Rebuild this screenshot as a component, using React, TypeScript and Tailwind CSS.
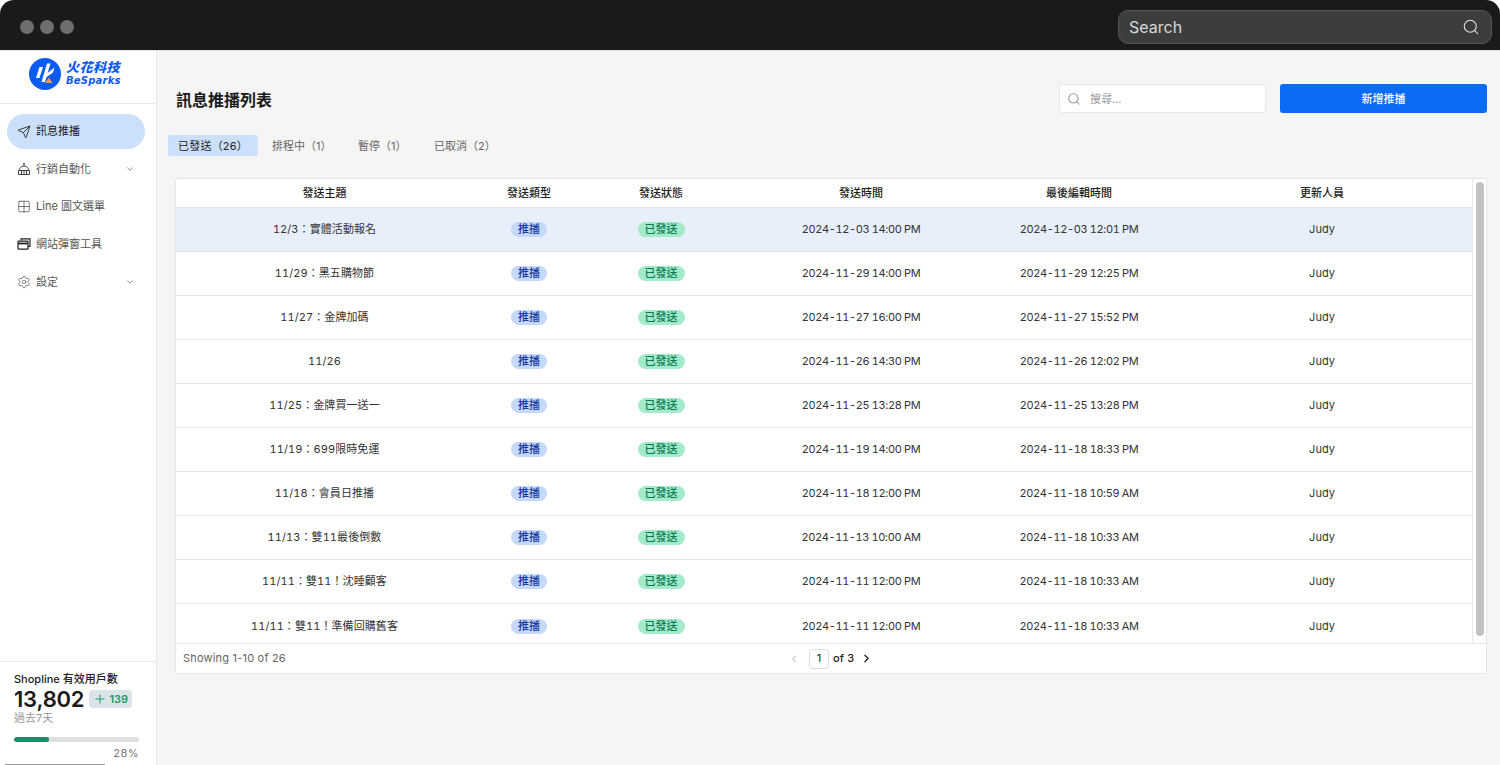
import React from 'react';
import { ChevronDown, ChevronLeft, ChevronRight, Grid2x2, Plus, Search, Send, Settings } from 'lucide-react';

const rows = [
  ['12/3：實體活動報名', '2024-12-03 14:00 PM', '2024-12-03 12:01 PM'],
  ['11/29：黑五購物節', '2024-11-29 14:00 PM', '2024-11-29 12:25 PM'],
  ['11/27：金牌加碼', '2024-11-27 16:00 PM', '2024-11-27 15:52 PM'],
  ['11/26', '2024-11-26 14:30 PM', '2024-11-26 12:02 PM'],
  ['11/25：金牌買一送一', '2024-11-25 13:28 PM', '2024-11-25 13:28 PM'],
  ['11/19：699限時免運', '2024-11-19 14:00 PM', '2024-11-18 18:33 PM'],
  ['11/18：會員日推播', '2024-11-18 12:00 PM', '2024-11-18 10:59 AM'],
  ['11/13：雙11最後倒數', '2024-11-13 10:00 AM', '2024-11-18 10:33 AM'],
  ['11/11：雙11！沈睡顧客', '2024-11-11 12:00 PM', '2024-11-18 10:33 AM'],
  ['11/11：雙11！準備回購舊客', '2024-11-11 12:00 PM', '2024-11-18 10:33 AM'],
];

const headers = ['發送主題', '發送類型', '發送狀態', '發送時間', '最後編輯時間', '更新人員'];
const tabs = ['排程中（1）', '暫停（1）', '已取消（2）'];
const gridCols = 'grid grid-cols-[297px_112px_152px_248px_188px_298px] items-center text-center';

function BotIcon() {
  return (
    <svg width="14" height="14" viewBox="0 0 14 14" fill="none" stroke="#444" strokeWidth="1">
      <path d="M7 1v3" />
      <circle cx="7" cy="1.6" r="0.8" fill="#444" stroke="none" />
      <path d="M2.500 8.500C2.500 5.800 4.500 4 7 4s4.500 1.800 4.500 4.500" />
      <path d="M1.500 8.500h11v4h-11z" />
      <path d="M5 6.700v.1M9 6.700v.1M4.500 8.500v4M7 8.500v4M9.500 8.500v4" />
    </svg>
  );
}

function PopupIcon() {
  return (
    <svg width="14" height="14" viewBox="0 0 14 14" fill="none" stroke="#222" strokeWidth="1.200">
      <path d="M4 3.500V1.800h9v7.700h-2" />
      <rect x="1" y="4.200" width="10" height="8" rx="0.500" />
      <path d="M1 6.500h10" strokeWidth="1.800" />
    </svg>
  );
}

function Logo() {
  return (
    <div className="flex items-center gap-[5px]">
      <svg width="32" height="32" viewBox="0 0 32 32">
        <circle cx="16" cy="16" r="16" fill="#0a5cf5" />
        <path d="M10.500 9h3.500L10.500 20H7z" fill="#fff" />
        <path d="M18 5.500h3.500L16 24h-3.500z" fill="#fff" />
        <path d="M25.500 9.500l-1.500 5-7 5 1-4z" fill="#fff" />
        <path d="M20 19.500l3.500 5.500h-7.500z" fill="#f2994a" />
      </svg>
      <div className="flex flex-col text-[#0a5cf5] italic font-black -mt-[1px]">
        <span className="text-[13px] leading-[15px] tracking-[0.5px]">火花科技</span>
        <span className="text-[10px] leading-[12px] tracking-[0.2px] font-['DejaVu_Sans']">BeSparks</span>
      </div>
    </div>
  );
}

function NavItem({ icon, label, active, caret }: { icon: React.ReactNode; label: string; active?: boolean; caret?: boolean }) {
  return (
    <div
      className={`ml-[7px] mr-[11px] h-[35px] rounded-full flex items-center pl-[10px] pr-[10px] gap-[5px] text-[11px] ${
        active ? 'bg-[#cce0fb] text-[#1a1a1a]' : 'text-[#555]'
      }`}
    >
      <span className="w-[14px] flex justify-center">{icon}</span>
      <span className="flex-1">{label}</span>
      {caret && <ChevronDown size={10} className="text-[#777]" />}
    </div>
  );
}

export default function App() {
  return (
    <div className="relative w-[1500px] h-[765px] overflow-hidden bg-white flex flex-col font-['Inter','Noto_Sans_CJK_TC',sans-serif] text-[#222]">
      {/* window title bar */}
      <div className="h-[50px] shrink-0 bg-[#1a1a1a] rounded-t-[14px] flex items-center justify-between pl-[20px] pr-[8px] pt-[3px]">
        <div className="flex gap-[6px]">
          <span className="w-[14px] h-[14px] rounded-full bg-[#6e6e6e]" />
          <span className="w-[14px] h-[14px] rounded-full bg-[#6e6e6e]" />
          <span className="w-[14px] h-[14px] rounded-full bg-[#6e6e6e]" />
        </div>
        <div className="w-[374px] h-[34px] rounded-[10px] bg-[#3c3d3d] border border-[#555] flex items-center justify-between pl-[10px] pr-[11px] text-[16px] text-[#d8d8d8]">
          <span>Search</span>
          <Search size={18} strokeWidth={1.400} className="text-[#e4e4e4]" />
        </div>
      </div>

      <div className="flex-1 flex min-h-0 border-t border-[#e5e5e5]">
        {/* sidebar */}
        <div className="w-[157px] shrink-0 bg-white border-r border-[#e8e8e8] flex flex-col">
          <div className="h-[53px] border-b border-[#e8e8e8] flex items-start pt-[7px] pl-[29px]">
            <Logo />
          </div>
          <div className="flex flex-col gap-[2.600px] pt-[10px]">
            <NavItem active icon={<Send size={14} strokeWidth={1.400} />} label="訊息推播" />
            <NavItem icon={<BotIcon />} label="行銷自動化" caret />
            <NavItem icon={<Grid2x2 size={15} strokeWidth={1.100} className="text-[#333]" />} label="Line 圖文選單" />
            <NavItem icon={<PopupIcon />} label="網站彈窗工具" />
            <NavItem icon={<Settings size={14} strokeWidth={1.200} />} label="設定" caret />
          </div>
          <div className="mt-auto border-t border-[#e8e8e8] h-[104px] px-[14px] pt-[10px]">
            <div className="text-[11px] leading-[14px] font-medium text-[#222]">Shopline 有效用戶數</div>
            <div className="flex items-center gap-[5px] h-[24px] mt-[1px]">
              <span className="text-[22px] font-semibold text-[#1a1a1a] leading-none tracking-[-0.2px]">13,802</span>
              <span className="h-[18px] px-[4px] rounded-[4px] bg-[#dbe4e8] flex items-center text-[11px] font-semibold text-[#1f9a68]">
                <Plus size={14} strokeWidth={1.800} className="mr-[2px]" />139
              </span>
            </div>
            <div className="text-[11px] leading-[14px] text-[#999]">過去7天</div>
            <div className="mt-[12px] h-[5px] w-[125px] rounded-full bg-[#e0e0e0] overflow-hidden">
              <div className="h-full w-[28%] rounded-full bg-[#1c8c66]" />
            </div>
            <div className="w-[125px] text-right text-[11px] leading-[14px] mt-[4px] text-[#777] tracking-[0.5px]">28%</div>
          </div>
        </div>

        {/* main */}
        <div className="flex-1 bg-[#f5f5f5] pl-[11px] pr-[13px] min-w-0">
          <div className="flex items-center justify-between pl-[8px] pt-[33px]">
            <h1 className="text-[16px] font-semibold text-[#1a1a1a] pt-[3px]">訊息推播列表</h1>
            <div className="flex gap-[14px]">
              <div className="w-[207px] h-[29px] bg-white border border-[#e8e8e8] rounded-[3px] flex items-center pl-[7px] gap-[9px] text-[11px] text-[#999]">
                <Search size={14} className="text-[#999]" strokeWidth={1.800} />
                <span className="pt-[1px]">搜尋...</span>
              </div>
              <div className="w-[207px] h-[29px] bg-[#0a6cf5] rounded-[3px] flex items-center justify-center text-[11px] font-medium text-white pt-[1px]">
                新增推播
              </div>
            </div>
          </div>

          <div className="flex items-center mt-[22px] h-[21px] text-[11px] text-[#666]">
            <div className="w-[90px] h-[21px] rounded-[3px] bg-[#cce0fb] text-[#222] flex items-center justify-center pt-[1px] tracking-[0.2px]">已發送（26）</div>
            <div className="ml-[14px] w-[86px] pt-[1px]">{tabs[0]}</div>
            <div className="w-[76px] pt-[1px]">{tabs[1]}</div>
            <div className="pt-[1px]">{tabs[2]}</div>
          </div>

          {/* table */}
          <div className="ml-[7px] mt-[22px] h-[496px] bg-white border border-[#e5e5e5] rounded-[3px] flex flex-col overflow-hidden">
            <div className="flex h-[465px] border-b border-[#e5e5e5]">
              <div className="flex-1 min-w-0">
                <div className={`${gridCols} h-[29px] border-b border-[#e5e5e5] text-[11px] font-medium text-[#222]`}>
                  {headers.map((h) => (
                    <div key={h}>{h}</div>
                  ))}
                </div>
                {rows.map((r, i) => (
                  <div
                    key={r[0]}
                    className={`${gridCols} text-[11px] text-[#333] tabular-nums ${i === 0 ? 'bg-[#e7effb]' : ''} ${
                      i === rows.length - 1 ? 'h-[40px] pt-[4px]' : 'h-[44px] border-b border-[#e5e5e5]'
                    }`}
                  >
                    <div className="tracking-[0.08px]">{r[0]}</div>
                    <div className="flex justify-center">
                      <span className="h-[15px] w-[36px] rounded-full bg-[#c6d8f8] text-[#1a3a9c] font-medium flex items-center justify-center">推播</span>
                    </div>
                    <div className="flex justify-center">
                      <span className="h-[15px] w-[47px] rounded-full bg-[#a3eacb] text-[#0c7a50] font-medium flex items-center justify-center">已發送</span>
                    </div>
                    <div className="tracking-[-0.38px]">{r[1]}</div>
                    <div className="tracking-[-0.38px]">{r[2]}</div>
                    <div>Judy</div>
                  </div>
                ))}
              </div>
              <div className="w-[14px] shrink-0 border-l border-[#e8e8e8] flex justify-center pt-[3px]">
                <div className="w-[8px] h-[454px] rounded-full bg-[#c2c2c2]" />
              </div>
            </div>
            <div className="flex-1 relative flex items-center pl-[7px] text-[11px] text-[#666] tracking-[0.2px]">
              <span>Showing 1-10 of 26</span>
              <div className="absolute left-[612px] flex items-center text-[#222]">
                <ChevronLeft size={12} className="text-[#aaa]" />
                <span className="ml-[9px] w-[20px] h-[20px] border border-[#ddd] rounded-[3px] bg-white flex items-center justify-center">1</span>
                <span className="ml-[4px] font-medium">of 3</span>
                <ChevronRight size={13} strokeWidth={2.400} className="ml-[6px]" />
              </div>
            </div>
          </div>
        </div>
      </div>
      {/* thin scrollbar sliver along the bottom of the sidebar */}
      <div className="absolute left-[5px] bottom-0 w-[100px] h-px bg-[#999]" />
    </div>
  );
}
